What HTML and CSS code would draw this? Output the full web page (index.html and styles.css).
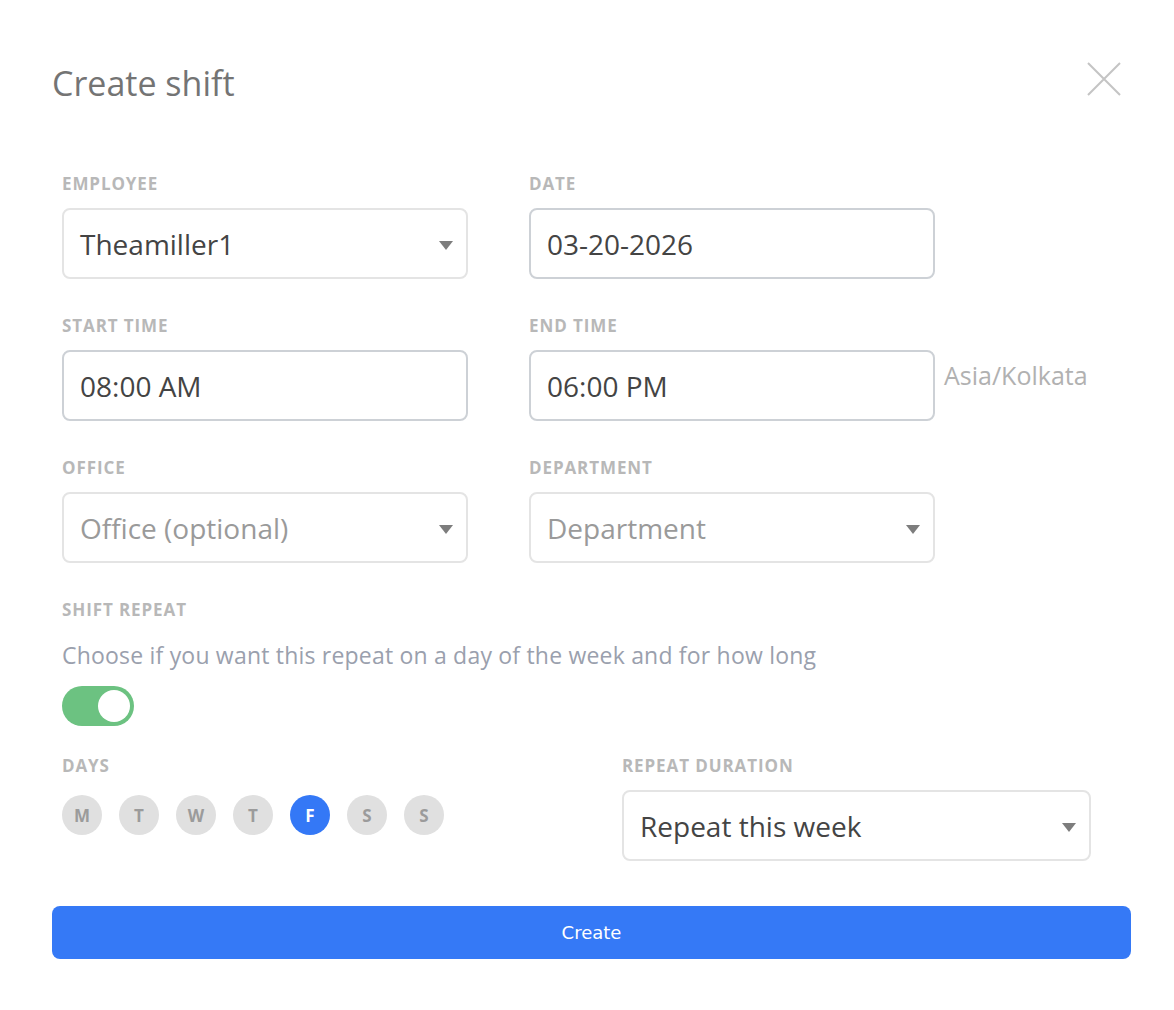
FILE: index.html
```html
<!DOCTYPE html>
<html lang="en">
<head>
    <meta charset="UTF-8">
    <meta name="viewport" content="width=device-width, initial-scale=1.0">
    <title>Create shift</title>
    <link rel="stylesheet" href="styles.css">
</head>
<body>
    <div class="modal">
        <div class="modal-header">
            <h1>Create shift</h1>
            <button class="close-btn" aria-label="Close">
                <svg width="34" height="34" viewBox="0 0 34 34">
                    <path d="M1 1 L33 33 M33 1 L1 33" stroke="#c4c4c4" stroke-width="2" fill="none"/>
                </svg>
            </button>
        </div>

        <div class="form">
            <div class="row">
                <div class="group">
                    <label>Employee</label>
                    <div class="field select">Theamiller1</div>
                </div>
                <div class="group">
                    <label>Date</label>
                    <div class="field dark">03-20-2026</div>
                </div>
            </div>

            <div class="row">
                <div class="group">
                    <label>Start time</label>
                    <div class="field dark">08:00 AM</div>
                </div>
                <div class="group">
                    <label>End time</label>
                    <div class="field dark">06:00 PM</div>
                </div>
                <div class="tz">Asia/Kolkata</div>
            </div>

            <div class="row">
                <div class="group">
                    <label>Office</label>
                    <div class="field select placeholder">Office (optional)</div>
                </div>
                <div class="group">
                    <label>Department</label>
                    <div class="field select placeholder">Department</div>
                </div>
            </div>

            <div class="repeat">
                <label>Shift repeat</label>
                <p class="hint">Choose if you want this repeat on a day of the week and for how long</p>
                <div class="toggle on"><span class="knob"></span></div>
            </div>

            <div class="row bottom">
                <div class="days-group">
                    <label>Days</label>
                    <div class="days">
                        <span class="day">M</span>
                        <span class="day">T</span>
                        <span class="day">W</span>
                        <span class="day">T</span>
                        <span class="day active">F</span>
                        <span class="day">S</span>
                        <span class="day">S</span>
                    </div>
                </div>
                <div class="group wide">
                    <label>Repeat duration</label>
                    <div class="field select">Repeat this week</div>
                </div>
            </div>
        </div>

        <button class="create-btn">Create</button>
    </div>
</body>
</html>
```

FILE: styles.css
```css
body {
    margin: 0;
    background-color: #fff;
    font-family: "Open Sans", Lato, sans-serif;
}

.modal {
    padding: 60px 43px 50px 52px;
}

.modal-header {
    display: flex;
    justify-content: space-between;
    align-items: flex-start;
}

.modal-header h1 {
    margin: 0;
    font-size: 34px;
    font-weight: 400;
    color: #747474;
    line-height: 46px;
}

.close-btn {
    background: none;
    border: none;
    padding: 0;
    margin: 2px 10px 0 0;
    cursor: pointer;
}

.form {
    padding: 0 0 0 10px;
    margin-top: 68px;
}

.row {
    display: flex;
    gap: 61px;
    margin-bottom: 37px;
}

.group {
    width: 406px;
}

label {
    display: block;
    font-size: 17px;
    font-weight: 700;
    letter-spacing: 0.9px;
    color: #b8b8b8;
    text-transform: uppercase;
    line-height: 20px;
    margin-bottom: 14px;
}

.field {
    box-sizing: border-box;
    height: 71px;
    border: 2px solid #e4e4e4;
    border-radius: 8px;
    padding: 0 16px;
    display: flex;
    align-items: center;
    font-size: 28px;
    color: #444;
    position: relative;
}

.field.dark {
    border-color: #cdd1d6;
}

.field.placeholder {
    color: #9a9a9a;
}

.field.select::after {
    content: "";
    position: absolute;
    right: 13px;
    top: 31px;
    border-left: 7px solid transparent;
    border-right: 7px solid transparent;
    border-top: 9px solid #7d7d7d;
}

.tz {
    margin: 44px 0 0 -52px;
    font-size: 25px;
    line-height: 30px;
    color: #b1b1b1;
}

.repeat label {
    margin-bottom: 0;
}

.hint {
    margin: 21px 0 17px;
    font-size: 23px;
    letter-spacing: 0.2px;
    line-height: 28px;
    color: #9aa0ad;
}

.toggle {
    width: 72px;
    height: 40px;
    border-radius: 20px;
    background-color: #6cc281;
    position: relative;
}

.knob {
    position: absolute;
    right: 4px;
    top: 4px;
    width: 32px;
    height: 32px;
    border-radius: 50%;
    background-color: #fff;
}

.row.bottom {
    margin-top: 30px;
    margin-bottom: 0;
    gap: 0;
    justify-content: space-between;
    width: 1029px;
}

.days-group label {
    margin-bottom: 19px;
}

.days {
    display: flex;
    gap: 17px;
}

.day {
    width: 40px;
    height: 40px;
    border-radius: 50%;
    background-color: #e0e0e0;
    color: #9b9b9b;
    font-weight: 700;
    font-size: 17px;
    display: flex;
    align-items: center;
    justify-content: center;
}

.day.active {
    background-color: #3478f6;
    color: #fff;
}

.group.wide {
    width: 469px;
}

.group.wide label {
    margin-bottom: 14px;
}

.create-btn {
    display: block;
    width: 1079px;
    height: 53px;
    margin-top: 45px;
    border: none;
    border-radius: 8px;
    background-color: #3579f6;
    color: #fff;
    font-family: "DejaVu Sans", sans-serif;
    font-size: 18px;
    cursor: pointer;
}
```
